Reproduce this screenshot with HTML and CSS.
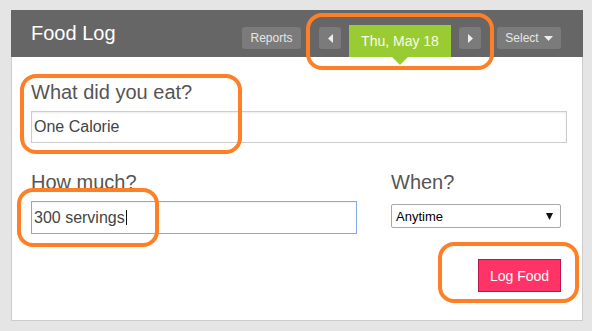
FILE: index.html
```html
<!DOCTYPE html>
<html>
<head>
<meta charset="utf-8">
<link rel="stylesheet" href="styles.css">
</head>
<body>
<div class="card">
  <div class="header">
    <div class="title">Food Log</div>
    <div class="nav">
      <div class="btn reports">Reports</div>
      <div class="btn arrow prev"><svg width="5" height="9" viewBox="0 0 5 9"><path d="M5 0 L0 4.5 L5 9 Z" fill="#eeeeee"/></svg></div>
      <div class="date">Thu, May 18</div>
      <div class="btn arrow next"><svg width="5" height="9" viewBox="0 0 5 9"><path d="M0 0 L5 4.5 L0 9 Z" fill="#eeeeee"/></svg></div>
      <div class="btn select-btn">Select <svg width="9" height="5" viewBox="0 0 9 5"><path d="M0 0 L9 0 L4.5 5 Z" fill="#eeeeee"/></svg></div>
    </div>
  </div>
  <div class="body">
    <div class="label">What did you eat?</div>
    <div class="field wide">One Calorie</div>
    <div class="row">
      <div class="col-left">
        <div class="label">How much?</div>
        <div class="field focus">300 servings<span class="caret"></span></div>
      </div>
      <div class="col-right">
        <div class="label">When?</div>
        <div class="dropdown"><span>Anytime</span><svg width="7" height="7" viewBox="0 0 7 7"><path d="M0 0 L7 0 L3.5 7 Z" fill="#111"/></svg></div>
      </div>
    </div>
    <div class="actions">
      <div class="log-btn">Log Food</div>
    </div>
  </div>
</div>
<div class="mark m1"></div>
<div class="mark m2"></div>
<div class="mark m3"></div>
<div class="mark m4"></div>
</body>
</html>
```

FILE: styles.css
```css
html, body {
  margin: 0;
  padding: 0;
}
body {
  background: #e4e5e4;
  padding: 10px 0 0 11px;
  font-family: "Liberation Sans", Arial, sans-serif;
  position: relative;
  height: 331px;
  box-sizing: border-box;
}
.card {
  width: 572px;
  box-sizing: border-box;
  background: #ffffff;
  border: 1px solid #cccccc;
  border-top: none;
}
.header {
  height: 47px;
  margin: 0 -1px;
  background: #666666;
  display: flex;
  align-items: stretch;
}
.title {
  color: #ffffff;
  font-size: 20px;
  line-height: 23px;
  padding-left: 20px;
  align-self: center;
}
.nav {
  margin-left: auto;
  padding-right: 22px;
  padding-top: 15px;
  display: flex;
  align-items: flex-start;
}
.btn {
  margin-top: 2px;
  height: 22px;
  background: #7b7b7b;
  border-radius: 3px;
  color: #e6e6e6;
  font-size: 12px;
  display: flex;
  align-items: center;
  justify-content: center;
  box-sizing: border-box;
}
.reports {
  width: 59px;
}
.arrow {
  width: 22px;
}
.prev {
  margin-left: 18px;
}
.date {
  margin-left: 8px;
  width: 102px;
  height: 32px;
  background: #99cc33;
  color: #fbfbe8;
  font-size: 14px;
  display: flex;
  align-items: center;
  justify-content: center;
  position: relative;
}
.date::after {
  content: "";
  position: absolute;
  left: 43px;
  top: 32px;
  border-left: 8px solid transparent;
  border-right: 8px solid transparent;
  border-top: 8px solid #99cc33;
}
.next {
  margin-left: 8px;
}
.select-btn {
  margin-left: 16px;
  width: 64px;
  gap: 5px;
}
.body {
  padding: 24px 21px 28px 19px;
}
.label {
  font-size: 20px;
  line-height: 23px;
  color: #555555;
}
.field {
  margin-top: 7px;
  height: 32px;
  box-sizing: border-box;
  border: 1px solid #cccccc;
  box-shadow: inset 0 1px 2px rgba(0, 0, 0, 0.08);
  padding: 0 2px;
  font-size: 16px;
  color: #444444;
  display: flex;
  align-items: center;
}
.wide {
  width: 536px;
}
.focus {
  height: 33px;
  border-color: #86a8e4;
  box-shadow: inset 0 1px 2px rgba(0, 0, 0, 0.06);
}
.caret {
  display: inline-block;
  width: 0;
  height: 15px;
  border-left: 1px solid #111111;
  margin-left: 1px;
}
.row {
  display: flex;
  margin-top: 28px;
}
.col-left {
  width: 326px;
}
.col-right {
  width: 170px;
  margin-left: 34px;
}
.dropdown {
  margin-top: 10px;
  height: 24px;
  box-sizing: border-box;
  border: 1px solid #a9a9a9;
  border-radius: 2px;
  padding: 0 7px 0 4px;
  font-size: 13px;
  color: #000000;
  display: flex;
  align-items: center;
  justify-content: space-between;
}
.actions {
  display: flex;
  justify-content: flex-end;
  margin-top: 25px;
}
.log-btn {
  width: 83px;
  height: 33px;
  box-sizing: border-box;
  background: #ff3366;
  border: 1px solid #b8174a;
  color: #ffffff;
  font-size: 14px;
  display: flex;
  align-items: center;
  justify-content: center;
}
.mark {
  position: absolute;
  border: 4px solid #ff7f27;
  border-radius: 16px;
  box-sizing: border-box;
}
.m1 {
  left: 306px;
  top: 13px;
  width: 188px;
  height: 57px;
}
.m2 {
  left: 20px;
  top: 74px;
  width: 222px;
  height: 80px;
}
.m3 {
  left: 17px;
  top: 188px;
  width: 142px;
  height: 59px;
}
.m4 {
  left: 438px;
  top: 242px;
  width: 141px;
  height: 61px;
}
```
